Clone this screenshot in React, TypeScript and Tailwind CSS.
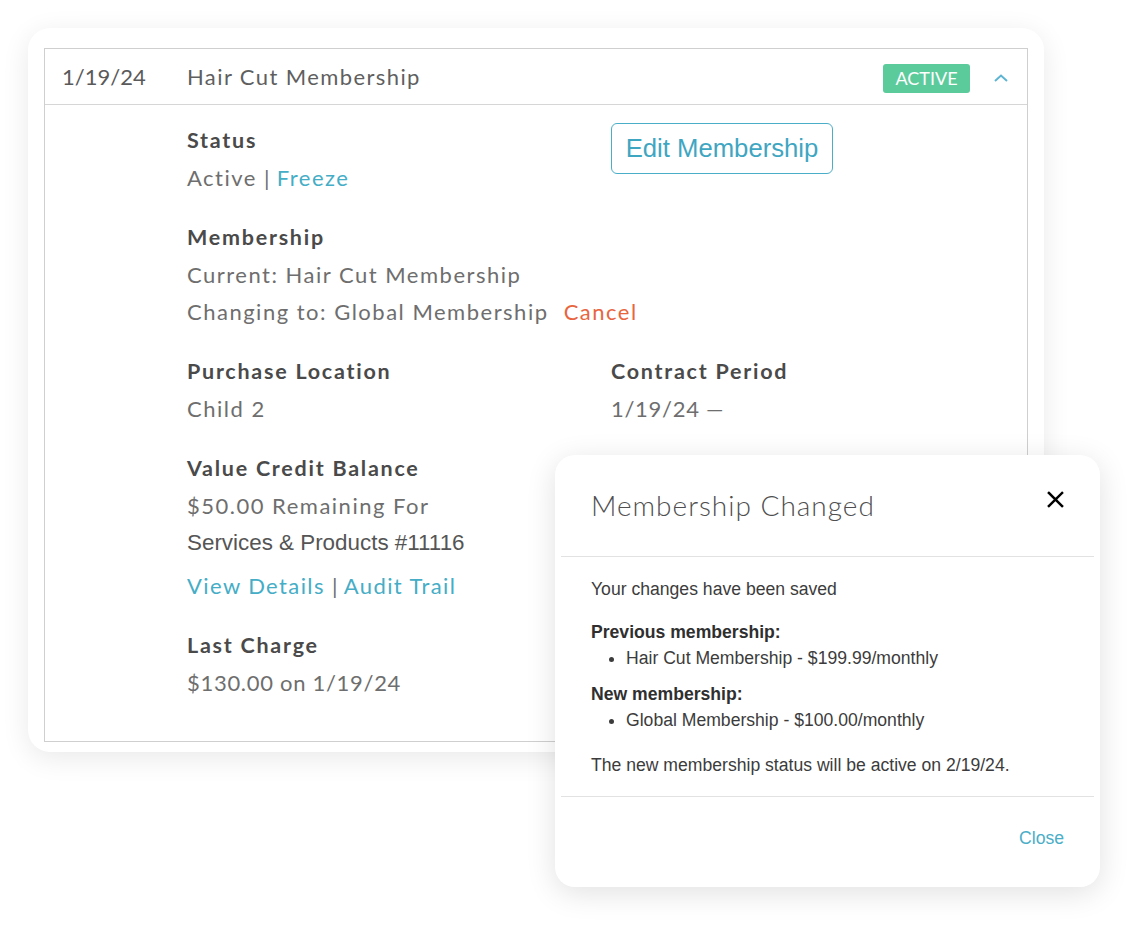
const lato = "font-['Lato','Noto_Sans',sans-serif]";
const arial = "font-['Liberation_Sans','Arial',sans-serif]";

function Label({ children }: { children: React.ReactNode }) {
  return <div className="text-[21.5px] leading-[37px] font-bold tracking-[1.75px] text-[#4a4a4a]">{children}</div>;
}

function Value({ children, tight }: { children: React.ReactNode; tight?: boolean }) {
  return (
    <div className={`text-[22px] leading-[37px] text-[#6e6e6e] ${tight ? "tracking-[0.7px]" : "tracking-[1.5px]"}`}>
      {children}
    </div>
  );
}

function MembershipCard() {
  return (
    <div className="ml-[28px] mt-[28px] w-[1016px] rounded-[22px] bg-white px-4 pt-5 pb-[10px] shadow-[0_6px_28px_rgba(0,0,0,0.09)]">
      <div className={`border border-[#cfcfcf] ${lato}`}>
        {/* header row */}
        <div className="flex h-[56px] items-center border-b border-[#d6d6d6] pl-[17px] pr-[19px]">
          <span className="w-[125px] text-[22px] text-[#5a5a5a]">1/19/24</span>
          <span className="text-[22px] tracking-[1.4px] text-[#5f5f5f]">Hair Cut Membership</span>
          <span className="ml-auto mt-[3px] flex h-[29px] w-[87px] items-center justify-center rounded-[3px] bg-[#5ccb9c] text-[18px] text-white">
            ACTIVE
          </span>
          <svg viewBox="0 0 14 8" className="ml-[24px] mt-[3px] h-[8px] w-[14px]" fill="none" stroke="#5eb5d2" strokeWidth="2">
            <path d="M1 7 7 1.5 13 7" />
          </svg>
        </div>

        {/* details */}
        <div className="pl-[142px] pt-[17px] pb-[40px]">
          <div className="grid grid-cols-[424px_1fr]">
            <div>
              <Label>Status</Label>
              <Value>
                Active <span className="tracking-normal">|</span> <span className="text-[#45adc6]">Freeze</span>
              </Value>
            </div>
            <div>
              <button
                className={`mt-px h-[51px] w-[222px] rounded-[6px] border-[1.5px] border-[#4aaec8] bg-white text-[25.7px] text-[#3fa6c2] ${arial}`}
              >
                Edit Membership
              </button>
            </div>
          </div>

          <div className="mt-[23px]">
            <Label>Membership</Label>
            <Value>Current: Hair Cut Membership</Value>
            <Value>
              Changing to: Global Membership <span className="ml-[8px] text-[#e8653f]">Cancel</span>
            </Value>
          </div>

          <div className="mt-[23px] grid grid-cols-[424px_1fr]">
            <div>
              <Label>Purchase Location</Label>
              <Value>Child 2</Value>
            </div>
            <div>
              <Label>Contract Period</Label>
              <Value tight>1/19/24 —</Value>
            </div>
          </div>

          <div className="mt-[23px]">
            <Label>Value Credit Balance</Label>
            <Value>$50.00 Remaining For</Value>
            <div className={`text-[22.4px] leading-[37px] text-[#555555] ${arial}`}>Services &amp; Products #11116</div>
            <div className="mt-[6px] text-[22px] leading-[37px] tracking-[1.4px] text-[#45adc6]">
              View Details <span className="tracking-normal text-[#6e6e6e]">|</span> Audit Trail
            </div>
          </div>

          <div className="mt-[23px]">
            <Label>Last Charge</Label>
            <Value tight>$130.00 on 1/19/24</Value>
          </div>
        </div>
      </div>
    </div>
  );
}

function ChangedModal() {
  return (
    <div className="absolute left-[555px] top-[455px] w-[545px] rounded-[20px] bg-white p-[6px] shadow-[0_6px_30px_rgba(0,0,0,0.12)]">
      <div className="flex items-start border-b border-[#e2e2e2] pl-[30px] pr-[30px] pt-[27px] pb-[34px]">
        <h2 className={`text-[28px] leading-[34px] font-light tracking-[1px] text-[#4f4f4f] ${lato}`}>Membership Changed</h2>
        <svg viewBox="0 0 18 18" className="ml-auto mt-[3px] h-[17px] w-[17px]" fill="none" stroke="#000" strokeWidth="2.6" strokeLinecap="square">
          <path d="M2 2 16 16M16 2 2 16" />
        </svg>
      </div>

      <div className={`px-[30px] pt-[19px] pb-[18px] text-[17.6px] leading-[26px] text-[#3c3c3c] ${arial}`}>
        <p>Your changes have been saved</p>
        <p className="mt-[17px] font-bold text-[#2f2f2f]">Previous membership:</p>
        <ul className="list-disc pl-[35px]">
          <li>Hair Cut Membership - $199.99/monthly</li>
        </ul>
        <p className="mt-[10px] font-bold text-[#2f2f2f]">New membership:</p>
        <ul className="list-disc pl-[35px]">
          <li>Global Membership - $100.00/monthly</li>
        </ul>
        <p className="mt-[19px]">The new membership status will be active on 2/19/24.</p>
      </div>

      <div className={`flex justify-end border-t border-[#e2e2e2] px-[30px] pt-[28px] pb-[30px] text-[17.6px] leading-[26px] ${arial}`}>
        <button className="text-[#4aaec8]">Close</button>
      </div>
    </div>
  );
}

export default function App() {
  return (
    <div className="relative h-[930px] w-[1145px] overflow-hidden bg-white">
      <MembershipCard />
      <ChangedModal />
    </div>
  );
}
